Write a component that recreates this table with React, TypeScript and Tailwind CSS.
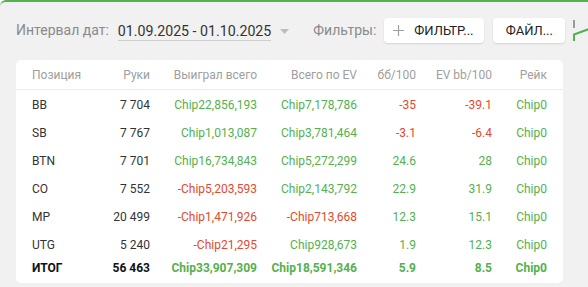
const GREEN = "text-[#55b04f]";
const RED = "text-[#e2492f]";

type Cell = { v: string; neg?: boolean };

const rows: { pos: string; hands: string; cells: Cell[] }[] = [
  { pos: "BB", hands: "7 704", cells: [{ v: "Chip22,856,193" }, { v: "Chip7,178,786" }, { v: "-35", neg: true }, { v: "-39.1", neg: true }, { v: "Chip0" }] },
  { pos: "SB", hands: "7 767", cells: [{ v: "Chip1,013,087" }, { v: "Chip3,781,464" }, { v: "-3.1", neg: true }, { v: "-6.4", neg: true }, { v: "Chip0" }] },
  { pos: "BTN", hands: "7 701", cells: [{ v: "Chip16,734,843" }, { v: "Chip5,272,299" }, { v: "24.6" }, { v: "28" }, { v: "Chip0" }] },
  { pos: "CO", hands: "7 552", cells: [{ v: "-Chip5,203,593", neg: true }, { v: "Chip2,143,792" }, { v: "22.9" }, { v: "31.9" }, { v: "Chip0" }] },
  { pos: "MP", hands: "20 499", cells: [{ v: "-Chip1,471,926", neg: true }, { v: "-Chip713,668", neg: true }, { v: "12.3" }, { v: "15.1" }, { v: "Chip0" }] },
  { pos: "UTG", hands: "5 240", cells: [{ v: "-Chip21,295", neg: true }, { v: "Chip928,673" }, { v: "1.9" }, { v: "12.3" }, { v: "Chip0" }] },
];

const cols = "grid grid-cols-[68px_50px_107px_100px_59px_76px_55px]";
const headers = ["Руки", "Выиграл всего", "Всего по EV", "бб/100", "EV bb/100", "Рейк"];

export default function App() {
  return (
    <div
      className="w-[588px] h-[287px] overflow-hidden bg-[#f1f1f1] border-t-2 border-[#55b04f] rounded-tl-[6px]"
      style={{ fontFamily: "Roboto, 'Liberation Sans', sans-serif" }}
    >
      {/* toolbar */}
      <div className="flex items-center h-[25px] mt-[16px] pl-[16px] whitespace-nowrap">
        <span className="text-[14px] text-[#8a8a8a]">Интервал дат:</span>
        <span className="ml-[9px] text-[14.2px] text-[#333] border-b border-[#cfcfcf] leading-[18px] mt-[2px]">
          01.09.2025 - 01.10.2025
        </span>
        <svg className="ml-[9px] mt-[1px] shrink-0" width="9" height="5" viewBox="0 0 9 5">
          <polygon points="0,0 9,0 4.5,5" fill="#bdbdbd" />
        </svg>
        <span className="ml-[24px] text-[14px] text-[#8a8a8a]">Фильтры:</span>
        <button className="ml-[8px] h-[25px] w-[100px] shrink-0 flex items-center pl-[9px] bg-white rounded-[4px] shadow-[0_1px_2px_rgba(0,0,0,0.12)]">
          <svg width="11" height="11" viewBox="0 0 11 11">
            <path d="M5.5 0v11M0 5.5h11" stroke="#a0a0a0" strokeWidth="1.2" />
          </svg>
          <span className="ml-[10px] text-[13px] text-[#222]">ФИЛЬТР...</span>
        </button>
        <button className="ml-[9px] h-[25px] w-[72px] shrink-0 flex items-center justify-center bg-white rounded-[4px] shadow-[0_1px_2px_rgba(0,0,0,0.12)] text-[13px] text-[#222]">
          ФАЙЛ...
        </button>
        <svg className="ml-[8px] shrink-0" width="16" height="24" viewBox="0 0 16 24">
          <rect x="0" y="1" width="2" height="8" fill="#9a9a9a" />
          <path d="M1 22V15.5L16 10" stroke="#55b04f" strokeWidth="2" fill="none" />
        </svg>
      </div>

      {/* table */}
      <div className="mt-[17px] ml-[16px] w-[547px] h-[223px] bg-white rounded-[5px] shadow-[0_0_1px_rgba(0,0,0,0.06)] text-[12px]">
        <div className={`${cols} h-[30px] items-center px-[16px] border-b border-[#ececec] text-[#9e9e9e]`}>
          <span>Позиция</span>
          {headers.map((h) => (
            <span key={h} className="text-right">{h}</span>
          ))}
        </div>
        {rows.map((r) => (
          <div key={r.pos} className={`${cols} h-[28px] items-center px-[16px] pt-[1px]`}>
            <span className="text-[#333]">{r.pos}</span>
            <span className="text-right text-[#333]">{r.hands}</span>
            {r.cells.map((c, i) => (
              <span key={i} className={`text-right ${c.neg ? RED : GREEN}`}>{c.v}</span>
            ))}
          </div>
        ))}
        <div className={`${cols} h-[20px] items-center px-[16px] font-bold`}>
          <span className="text-[#111]">ИТОГ</span>
          <span className="text-right text-[#111]">56 463</span>
          <span className={`text-right ${GREEN}`}>Chip33,907,309</span>
          <span className={`text-right ${GREEN}`}>Chip18,591,346</span>
          <span className={`text-right ${GREEN}`}>5.9</span>
          <span className={`text-right ${GREEN}`}>8.5</span>
          <span className={`text-right ${GREEN}`}>Chip0</span>
        </div>
      </div>
    </div>
  );
}
